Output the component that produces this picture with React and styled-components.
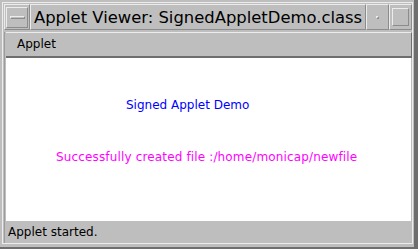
import React from "react";
import styled, { createGlobalStyle } from "styled-components";

const GRAY = "#bebebe";
const LIGHT = "#ececec";
const DARK = "#6e6e6e";
const MID = "#8c8c8c";

const Global = createGlobalStyle`
  html, body { margin: 0; padding: 0; background: ${GRAY}; }
  body { font-family: "DejaVu Sans", sans-serif; }
`;

const Window = styled.div`
  width: 418px;
  height: 249px;
  box-sizing: border-box;
  background: ${GRAY};
  padding: 2px 1px 3px 2px;
  border-right: 4px solid ${DARK};
  border-bottom: 2px solid ${DARK};
  display: flex;
`;

const Frame = styled.div`
  flex: 1;
  border: 1px solid ${LIGHT};
  display: flex;
  flex-direction: column;
  padding: 1px 0 0 1px;
`;

const TitleBar = styled.div`
  display: flex;
  height: 26px;
`;

const Section = styled.div`
  box-sizing: border-box;
  width: ${(p) => p.$w || "auto"};
  flex: ${(p) => (p.$grow ? 1 : "none")};
  border-top: 1px solid ${LIGHT};
  border-left: 1px solid ${LIGHT};
  border-right: 1px solid ${MID};
  border-bottom: 1px solid ${MID};
  display: flex;
  align-items: center;
  justify-content: ${(p) => (p.$grow ? "flex-start" : "center")};
`;

const Title = styled.span`
  font-family: "DejaVu Sans", sans-serif;
  font-size: 16.4px;
  color: #000;
  padding-left: 3px;
  white-space: nowrap;
`;

const BevelBox = styled.div`
  box-sizing: border-box;
  width: ${(p) => p.$w}px;
  height: ${(p) => p.$h}px;
  border-top: 1px solid ${LIGHT};
  border-left: 1px solid ${LIGHT};
  border-right: 1px solid ${MID};
  border-bottom: 1px solid ${MID};
  display: flex;
  align-items: center;
  justify-content: center;
`;

const Body = styled.div`
  flex: 1;
  display: flex;
  flex-direction: column;
  margin-top: 2px;
  padding-left: 1px;
  border-left: 1px solid #9c9c9c;
`;

const MenuBar = styled.div`
  height: 26px;
  box-sizing: border-box;
  border-top: 1px solid ${LIGHT};
  border-bottom: 2px solid ${DARK};
  border-right: 1px solid ${DARK};
  display: flex;
  align-items: center;
  padding-left: 11px;
`;

const MenuItem = styled.span`
  font-family: "DejaVu Sans", sans-serif;
  font-size: 12px;
  color: #000;
  margin-top: -2px;
`;

const Content = styled.div`
  flex: 1;
  background: #fff;
  display: flex;
  flex-direction: column;
  padding-top: 40px;
  margin-right: 1px;
`;

const Line = styled.div`
  font-family: "DejaVu Sans", sans-serif;
  font-size: 12px;
  line-height: 14px;
  white-space: nowrap;
  color: ${(p) => p.$color};
  margin-left: ${(p) => p.$x}px;
  margin-top: ${(p) => p.$gap || 0}px;
  letter-spacing: ${(p) => p.$ls || 0}px;
`;

const StatusBar = styled.div`
  height: 22px;
  display: flex;
  align-items: center;
  padding-left: 2px;
  font-family: "DejaVu Sans", sans-serif;
  font-size: 12px;
  color: #000;
`;

export default function App() {
  return (
    <>
      <Global />
      <Window>
        <Frame>
          <TitleBar>
            <Section $w="26px">
              <BevelBox $w={22} $h={21}>
                <BevelBox $w={15} $h={3} />
              </BevelBox>
            </Section>
            <Section $grow>
              <Title>Applet Viewer: SignedAppletDemo.class</Title>
            </Section>
            <Section $w="23px">
              <BevelBox $w={3} $h={3} />
            </Section>
            <Section $w="23px">
              <BevelBox $w={17} $h={18} />
            </Section>
          </TitleBar>
          <Body>
            <MenuBar>
              <MenuItem>Applet</MenuItem>
            </MenuBar>
            <Content>
              <Line $color="#0000ff" $x={120}>Signed Applet Demo</Line>
              <Line $color="#ff00ff" $x={50} $gap={38} $ls={0.15}>
                Successfully created file :/home/monicap/newfile
              </Line>
            </Content>
            <StatusBar>Applet started.</StatusBar>
          </Body>
        </Frame>
      </Window>
    </>
  );
}
